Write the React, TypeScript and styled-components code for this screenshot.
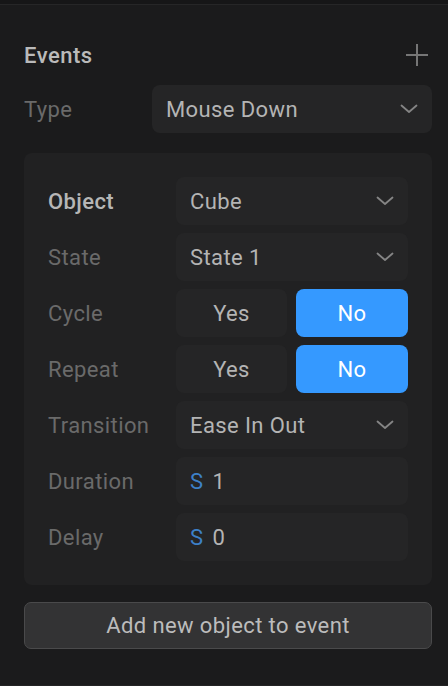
import React from "react";
import styled, { createGlobalStyle } from "styled-components";

const Global = createGlobalStyle`
  html, body { margin: 0; padding: 0; background: #1b1b1c; }
  body { font-family: Roboto, "Noto Sans", sans-serif; -webkit-font-smoothing: antialiased; }
  * { box-sizing: border-box; }
`;

const Page = styled.div`
  width: 448px;
  height: 686px;
  background: #1b1b1c;
  display: flex;
  flex-direction: column;
`;

const TopBand = styled.div`
  height: 5px;
  background: #161617;
  border-bottom: 1px solid #262627;
  flex: none;
`;

const Panel = styled.div`
  flex: 1;
  padding: 32px 16px 0 24px;
  display: flex;
  flex-direction: column;
  border-bottom: 1px solid #242425;
`;

const Header = styled.div`
  display: flex;
  align-items: center;
  justify-content: space-between;
  height: 36px;
`;

const Title = styled.div`
  font-size: 22px;
  font-weight: 500;
  color: #bababa;
  letter-spacing: 0.5px;
`;

const PlusBtn = styled.div`
  width: 24px;
  height: 24px;
  display: flex;
  align-items: center;
  justify-content: center;
  margin-right: 3px;
`;

const Row = styled.div<{ $labelW: number }>`
  display: grid;
  grid-template-columns: ${(p) => p.$labelW}px 1fr;
  align-items: center;
  height: 48px;
`;

const Label = styled.div<{ $strong?: boolean }>`
  font-size: 22px;
  color: ${(p) => (p.$strong ? "#b6b6b6" : "#6a6a6a")};
  font-weight: ${(p) => (p.$strong ? 500 : 400)};
  letter-spacing: 0.4px;
`;

const Field = styled.div`
  height: 48px;
  border-radius: 8px;
  background: #252526;
  display: flex;
  align-items: center;
  padding: 0 14px;
  font-size: 22px;
  color: #b4b4b4;
  letter-spacing: 0.4px;
`;

const FieldText = styled.span`
  flex: 1;
`;

const Unit = styled.span`
  color: #3d80c9;
  margin-right: 9px;
`;

const TypeRow = styled(Row)`
  margin-top: 12px;
  width: 408px;
`;

const Card = styled.div`
  margin-top: 20px;
  width: 408px;
  background: #212122;
  border-radius: 8px;
  padding: 24px;
  display: flex;
  flex-direction: column;
  gap: 8px;
`;

const Toggle = styled.div`
  display: grid;
  grid-template-columns: 111px 112px;
  gap: 9px;
  height: 48px;
`;

const ToggleBtn = styled.div<{ $on?: boolean }>`
  border-radius: 8px;
  background: ${(p) => (p.$on ? "#3599ff" : "#252526")};
  color: ${(p) => (p.$on ? "#ffffff" : "#b4b4b4")};
  display: flex;
  align-items: center;
  justify-content: center;
  font-size: 22px;
  letter-spacing: 0.4px;
`;

const AddButton = styled.button`
  margin-top: 17px;
  width: 408px;
  height: 47px;
  border-radius: 7px;
  border: 1px solid #4a4a4b;
  background: #333334;
  color: #bcbcbc;
  font-family: Roboto, "Noto Sans", sans-serif;
  font-size: 22px;
  letter-spacing: 0.4px;
  display: flex;
  align-items: center;
  justify-content: center;
  padding: 0;
`;

const Chevron = () => (
  <svg width="18" height="10" viewBox="0 0 18 10" fill="none">
    <path d="M1.5 1.5 L9 8 L16.5 1.5" stroke="#858585" strokeWidth="1.8" strokeLinecap="round" strokeLinejoin="round" />
  </svg>
);

const Plus = () => (
  <svg width="24" height="24" viewBox="0 0 24 24" fill="none">
    <path d="M12 1 V23 M1 12 H23" stroke="#767676" strokeWidth="2" />
  </svg>
);

const Select = ({ value }: { value: string }) => (
  <Field>
    <FieldText>{value}</FieldText>
    <Chevron />
  </Field>
);

const NumberField = ({ value }: { value: string }) => (
  <Field>
    <Unit>S</Unit>
    <FieldText>{value}</FieldText>
  </Field>
);

const YesNo = () => (
  <Toggle>
    <ToggleBtn>Yes</ToggleBtn>
    <ToggleBtn $on>No</ToggleBtn>
  </Toggle>
);

export default function App() {
  return (
    <Page>
      <Global />
      <TopBand />
      <Panel>
        <Header>
          <Title>Events</Title>
          <PlusBtn>
            <Plus />
          </PlusBtn>
        </Header>
        <TypeRow $labelW={128}>
          <Label>Type</Label>
          <Select value="Mouse Down" />
        </TypeRow>
        <Card>
          <Row $labelW={128}>
            <Label $strong>Object</Label>
            <Select value="Cube" />
          </Row>
          <Row $labelW={128}>
            <Label>State</Label>
            <Select value="State 1" />
          </Row>
          <Row $labelW={128}>
            <Label>Cycle</Label>
            <YesNo />
          </Row>
          <Row $labelW={128}>
            <Label>Repeat</Label>
            <YesNo />
          </Row>
          <Row $labelW={128}>
            <Label>Transition</Label>
            <Select value="Ease In Out" />
          </Row>
          <Row $labelW={128}>
            <Label>Duration</Label>
            <NumberField value="1" />
          </Row>
          <Row $labelW={128}>
            <Label>Delay</Label>
            <NumberField value="0" />
          </Row>
        </Card>
        <AddButton>Add new object to event</AddButton>
      </Panel>
    </Page>
  );
}
